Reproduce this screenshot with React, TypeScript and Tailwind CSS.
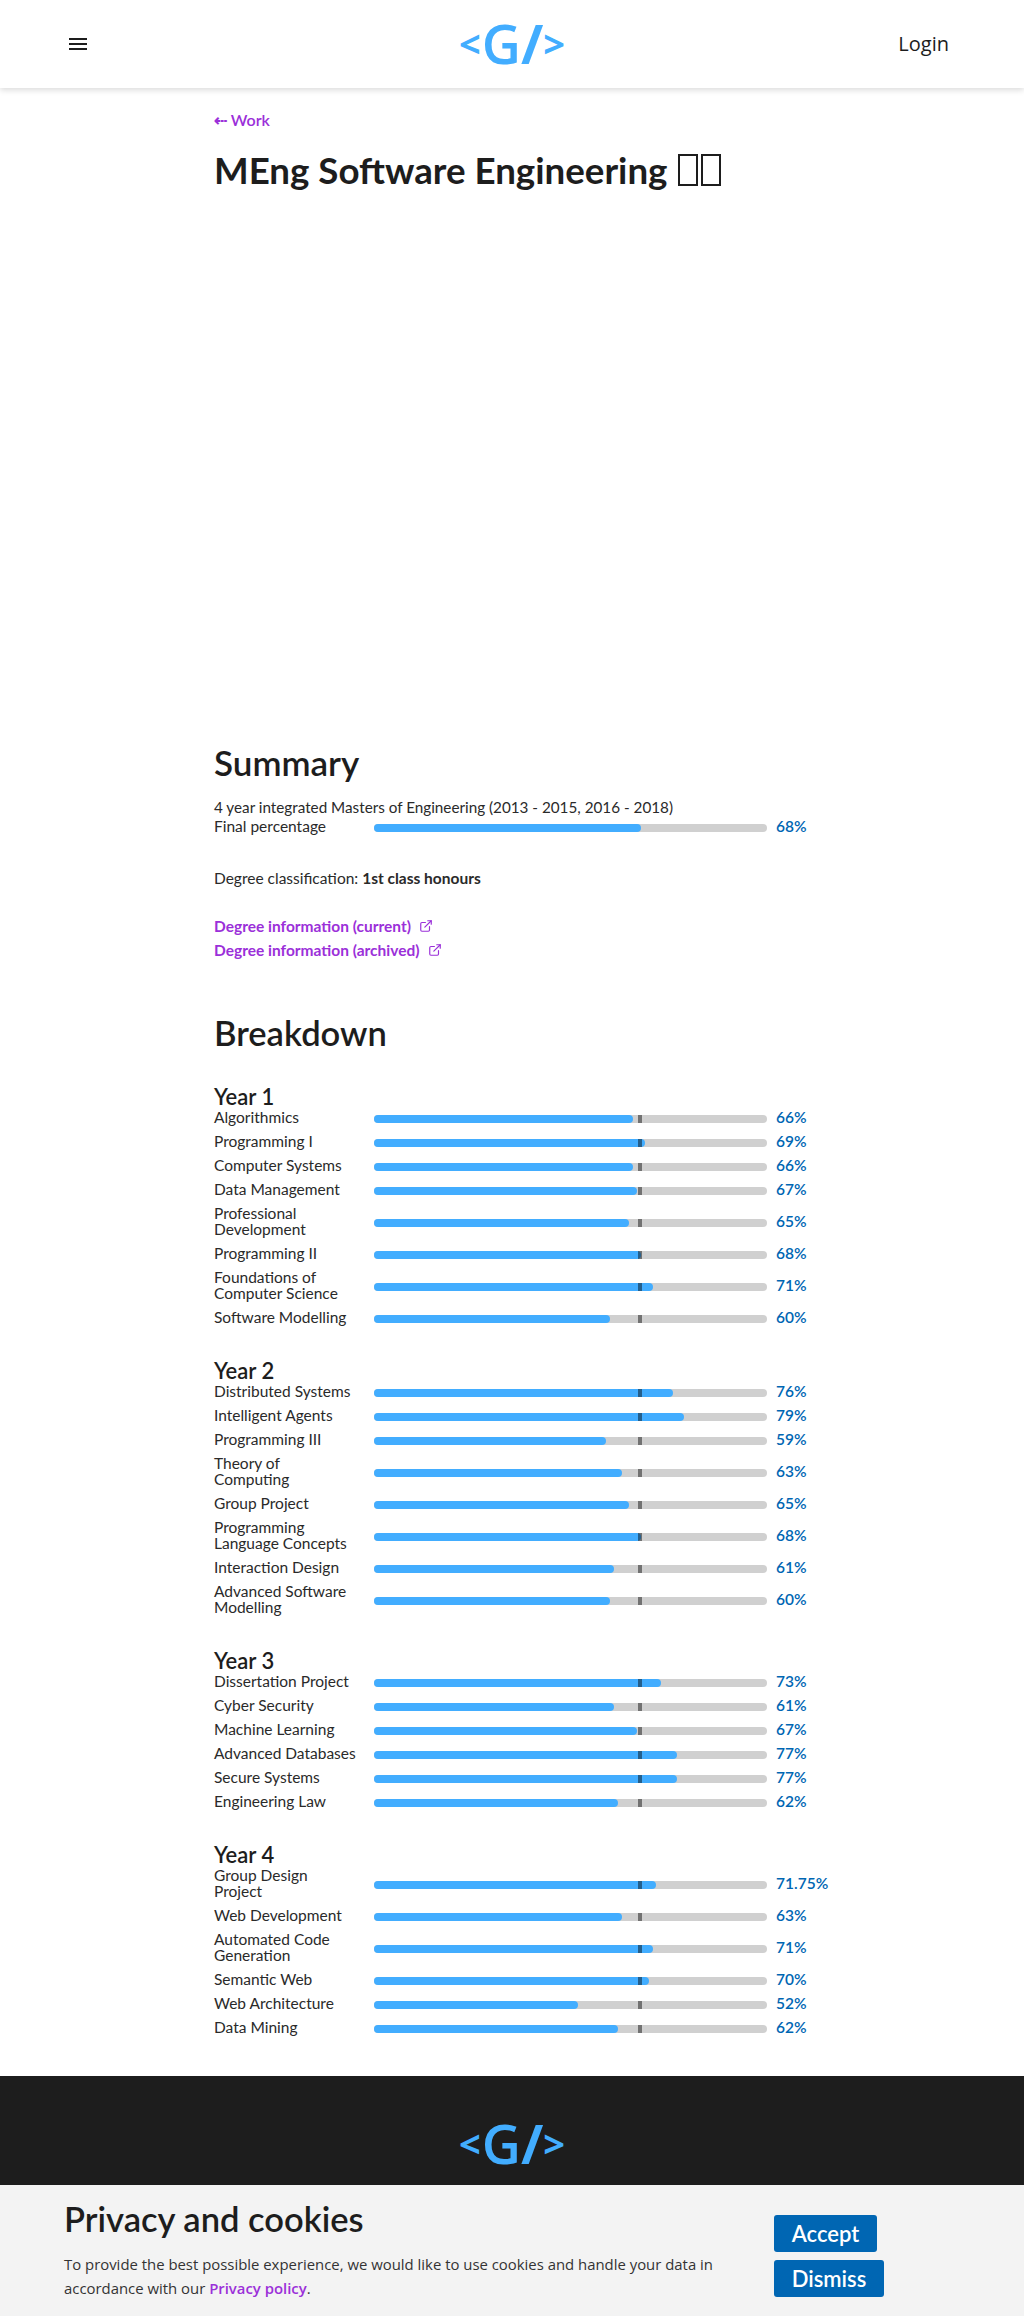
import { ExternalLink } from 'lucide-react';

interface Module {
  name: string;
  score: number;
}

const years: { title: string; modules: Module[] }[] = [
  {
    title: 'Year 1',
    modules: [
      { name: 'Algorithmics', score: 66 },
      { name: 'Programming I', score: 69 },
      { name: 'Computer Systems', score: 66 },
      { name: 'Data Management', score: 67 },
      { name: 'Professional\nDevelopment', score: 65 },
      { name: 'Programming II', score: 68 },
      { name: 'Foundations of\nComputer Science', score: 71 },
      { name: 'Software Modelling', score: 60 },
    ],
  },
  {
    title: 'Year 2',
    modules: [
      { name: 'Distributed Systems', score: 76 },
      { name: 'Intelligent Agents', score: 79 },
      { name: 'Programming III', score: 59 },
      { name: 'Theory of\nComputing', score: 63 },
      { name: 'Group Project', score: 65 },
      { name: 'Programming\nLanguage Concepts', score: 68 },
      { name: 'Interaction Design', score: 61 },
      { name: 'Advanced Software\nModelling', score: 60 },
    ],
  },
  {
    title: 'Year 3',
    modules: [
      { name: 'Dissertation Project', score: 73 },
      { name: 'Cyber Security', score: 61 },
      { name: 'Machine Learning', score: 67 },
      { name: 'Advanced Databases', score: 77 },
      { name: 'Secure Systems', score: 77 },
      { name: 'Engineering Law', score: 62 },
    ],
  },
  {
    title: 'Year 4',
    modules: [
      { name: 'Group Design\nProject', score: 71.75 },
      { name: 'Web Development', score: 63 },
      { name: 'Automated Code\nGeneration', score: 71 },
      { name: 'Semantic Web', score: 70 },
      { name: 'Web Architecture', score: 52 },
      { name: 'Data Mining', score: 62 },
    ],
  },
];

function Logo() {
  return (
    <div className="flex items-center justify-center font-['Open_Sans',sans-serif] text-[54px] leading-[64px] font-semibold text-[#42adff]">
      <span className="text-[38px] font-bold">&lt;</span>
      <span className="ml-px">G</span>
      <span className="font-bold">/</span>
      <span className="text-[38px] font-bold">&gt;</span>
    </div>
  );
}

function Bar({ score, marker }: { score: number; marker?: boolean }) {
  return (
    <div className="relative mt-[2px] h-2 w-[393px] shrink-0 rounded-full bg-[#d0d0d0]">
      <div className="h-2 rounded-full bg-[#42adff]" style={{ width: `${score}%` }} />
      {marker && <div className="absolute left-[264px] top-0 h-2 w-1 bg-black/45" />}
    </div>
  );
}

function Row({ name, score, marker }: { name: string; score: number; marker?: boolean }) {
  return (
    <div className="flex items-center">
      <div className="w-[160px] shrink-0 -translate-y-px whitespace-pre-line text-[15.5px] leading-4 text-[#2a2a2a]">{name}</div>
      <Bar score={score} marker={marker} />
      <div className="ml-[9px] -translate-y-px whitespace-nowrap text-[15.5px] leading-4 font-semibold text-[#0066b3]">{score}%</div>
    </div>
  );
}

export default function App() {
  return (
    <div className="h-[2316px] overflow-hidden bg-white font-['Lato',sans-serif] text-[#1d1d1d]">
      <header className="relative grid h-[88px] grid-cols-3 items-center px-[69px] shadow-[0_2px_6px_rgba(0,0,0,0.15)]">
        <svg width="18" height="12" viewBox="0 0 18 12" fill="#1d1d1d">
          <path d="M0 0h18v2H0zM0 5h18v2H0zM0 10h18v2H0z" />
        </svg>
        <div className="-mt-[3px]">
          <Logo />
        </div>
        <a className="mr-[6px] justify-self-end font-['Open_Sans',sans-serif] text-[20px]">Login</a>
      </header>

      <main className="mx-auto w-[596px] pt-5">
        <a className="block text-[16px] leading-6 font-semibold text-[#9b30d9]">
          <span className="font-bold">⇠</span> Work
        </a>
        <h1 className="mt-4 flex items-center text-[36.7px] leading-[44px] font-bold">
          MEng Software Engineering
          <span className="ml-[11px] h-8 w-5 border-2 border-[#1d1d1d]" />
          <span className="ml-[3px] h-8 w-5 border-2 border-[#1d1d1d]" />
        </h1>

        <div className="h-[548px]" />

        <h2 className="text-[35px] leading-[44px] font-semibold">Summary</h2>
        <p className="mt-[13px] text-[15.25px] leading-5 text-[#2a2a2a]">4 year integrated Masters of Engineering (2013 - 2015, 2016 - 2018)</p>
        <div className="flex h-5 items-center">
          <div className="w-[160px] shrink-0 text-[15.5px] text-[#2a2a2a]">Final percentage</div>
          <Bar score={68} />
          <div className="ml-[9px] text-[15.5px] font-semibold text-[#0066b3]">68%</div>
        </div>
        <p className="mt-[31px] text-[15.5px] leading-5 text-[#2a2a2a]">
          Degree classification: <strong className="font-bold">1st class honours</strong>
        </p>
        <a className="mt-7 flex items-center gap-2 text-[15.5px] leading-5 font-bold text-[#9b30d9]">
          Degree information (current) <ExternalLink size={14} />
        </a>
        <a className="mt-1 flex items-center gap-2 text-[15.5px] leading-5 font-bold text-[#9b30d9]">
          Degree information (archived) <ExternalLink size={14} />
        </a>

        <h2 className="mt-[51px] text-[34.5px] leading-[44px] font-semibold">Breakdown</h2>

        <div className="mt-[30px] flex flex-col gap-[33px]">
          {years.map((year) => (
            <section key={year.title}>
              <h3 className="text-[22px] leading-6 font-semibold">{year.title}</h3>
              <div className="mt-px flex flex-col gap-2">
                {year.modules.map((m) => (
                  <Row key={m.name} name={m.name} score={m.score} marker />
                ))}
              </div>
            </section>
          ))}
        </div>
      </main>

      <footer className="mt-[40px] h-[240px] bg-[#1d1d1d] pt-[35px]">
        <Logo />
      </footer>

      <div className="fixed inset-x-0 bottom-0 flex h-[131px] bg-[#f3f3f3] pl-16 pr-[140px]">
        <div className="flex-1">
          <h2 className="mt-[14px] text-[34.5px] leading-10 font-semibold">Privacy and cookies</h2>
          <p className="mt-[13px] w-[680px] font-['Open_Sans',sans-serif] text-[14.9px] leading-6 text-[#333]">
            To provide the best possible experience, we would like to use cookies and handle your data in accordance
            with our <a className="font-semibold text-[#9b30d9]">Privacy policy</a>.
          </p>
        </div>
        <div className="flex flex-col items-start gap-2 pt-[30px]">
          <button className="h-[37px] w-[103px] rounded-[3px] bg-[#0066b3] text-[22px] font-semibold text-white">Accept</button>
          <button className="h-[37px] w-[110px] rounded-[3px] bg-[#0066b3] text-[22px] font-semibold text-white">Dismiss</button>
        </div>
      </div>
    </div>
  );
}
